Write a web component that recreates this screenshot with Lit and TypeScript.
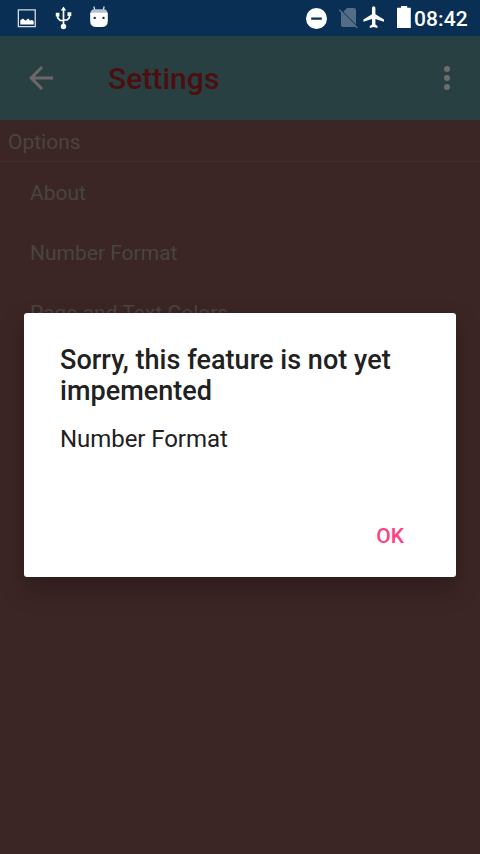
import { LitElement, html, css } from "lit";
import { customElement, property } from "lit/decorators.js";

@customElement("status-bar")
class StatusBar extends LitElement {
  static styles = css`
    :host { display: flex; height: 36px; background: #0a2f54; color: #fff; }
    .icons { display: block; flex: none; width: 414px; height: 36px; }
    .clock { padding-top: 1px; font: 500 21px/36px Roboto, sans-serif; letter-spacing: 0.1px; white-space: nowrap; }
  `;
  render() {
    return html`
      <svg class="icons" viewBox="0 0 414 36" fill="#fff">
        <g>
          <path d="M17.700 9.200h18.200v18H17.700zM19 10.500v15.400h15.600V10.500z" fill="#d3dbe3" fill-rule="evenodd" />
          <path d="M20.300 24.500v-4.200l2.700-1.800 2.500 2.300 2.700-2.300 1.800 2 2.200-.4 1.500 1.500v2.900z" />
        </g>
        <g>
          <circle cx="63.500" cy="26.500" r="2.700" />
          <path d="M60.800 10.400 63.500 6.500l2.700 3.900z" />
          <path d="M55.800 12.800h3.600v3.600h-3.600zM67.500 12.200h3.800v3.800h-3.800z" />
          <path d="M63.500 9v17M57.700 15.500v2.300l2.500 2.700h3.300M69.400 15v2.700l-2.300 2.300h-3.600" fill="none" stroke="#fff" stroke-width="1.700" />
        </g>
        <g>
          <path d="M93.800 6.500l1 3.500M104.200 6.500l-1 3.500" stroke="#d8dfe6" stroke-width="1.300" />
          <path d="M93.500 9.300h11q3 1 3 3.700h-17q0-2.700 3-3.700z" fill="#b4c0cc" />
          <path d="M90.200 12.800h17.600v8.200q0 6-6.300 6h-5q-6.300 0-6.300-6z" />
          <circle cx="94.700" cy="17.900" r="1.200" fill="#0a2f54" />
          <circle cx="103.500" cy="17.900" r="1.200" fill="#0a2f54" />
        </g>
        <path d="M316.500 8a10.500 10.500 0 1 0 0 21 10.500 10.500 0 0 0 0-21zm-5.300 9.500h10.600v2.300h-10.600z" fill-rule="evenodd" />
        <g fill="#546d87">
          <path d="M343.300 11.700 347 8h7q2 0 2 2v14.400z" />
          <path d="M341 11.400V25q0 2 2 2h13.500z" />
          <path d="M339.300 9.700 357.300 27.800" stroke="#546d87" stroke-width="1.500" />
        </g>
        <path d="M384 21.800v-2.200l-8.600-5.400V8a1.700 1.700 0 0 0-3.400 0v6.200l-8.600 5.400v2.200l8.600-2.700v5.400l-2.200 1.600v1.900l3.900-1.100 3.800 1.100v-1.900l-2.100-1.600v-5.400z" />
        <path d="M401 6h6.200v1.800h3.600V28H397V7.800h4z" />
      </svg>
      <span class="clock">08:42</span>
    `;
  }
}

@customElement("settings-page")
class SettingsPage extends LitElement {
  static styles = css`
    :host { display: block; font-family: Roboto, sans-serif; }
    .toolbar { display: flex; align-items: center; height: 84px; background: #284042; }
    .back { width: 36px; height: 36px; margin-left: 23px; }
    .title { flex: 1; margin-left: 49px; padding-top: 2px; font-size: 30px; line-height: 36px; letter-spacing: 0.05px; font-weight: 500; color: #4c0e0e; }
    .more { width: 36px; height: 36px; margin-right: 15px; }
    .category { box-sizing: border-box; height: 42px; padding: 2px 8px 0; border-bottom: 1px solid #452b32; font-size: 21px; line-height: 40px; color: #48453e; }
    .item { box-sizing: border-box; height: 60px; padding: 1px 30px 0; border-bottom: 1px solid #382424; font-size: 21px; line-height: 60px; color: #48453e; }
  `;
  render() {
    return html`
      <div class="toolbar">
        <svg class="back" viewBox="0 0 24 24" fill="#6b6867"><path d="M20 11H7.830l5.590-5.590L12 4l-8 8 8 8 1.410-1.410L7.830 13H20z" /></svg>
        <div class="title">Settings</div>
        <svg class="more" viewBox="0 0 24 24" fill="#6d6b6b"><circle cx="12" cy="6" r="2" /><circle cx="12" cy="12" r="2" /><circle cx="12" cy="18" r="2" /></svg>
      </div>
      <div class="category">Options</div>
      ${["About", "Number Format", "Page and Text Colors"].map((t) => html`<div class="item">${t}</div>`)}
    `;
  }
}

@customElement("alert-dialog")
class AlertDialog extends LitElement {
  @property() heading = "";
  @property() message = "";
  static styles = css`
    :host { box-sizing: border-box; display: flex; flex-direction: column; width: 432px; height: 264px; padding: 32px 36px 0; border-radius: 3px; background: #fff; color: #212121; font-family: Roboto, sans-serif; box-shadow: 0 12px 26px rgba(0, 0, 0, 0.24), 0 0 5px rgba(0, 0, 0, 0.08); }
    .heading { margin: 0; font-size: 27px; line-height: 31px; font-weight: 500; letter-spacing: 0.04px; }
    .message { margin: 18px 0 0; font-size: 24px; line-height: 28px; letter-spacing: -0.06px; }
    .ok { align-self: flex-end; margin: 71px 16px 0 0; padding: 0; border: 0; background: none; font: 500 21px/24px Roboto, sans-serif; color: #ff4081; }
  `;
  render() {
    return html`
      <h2 class="heading">${this.heading}</h2>
      <p class="message">${this.message}</p>
      <button class="ok">OK</button>
    `;
  }
}

@customElement("app-root")
class AppRoot extends LitElement {
  static styles = css`
    :host { display: block; position: relative; width: 480px; height: 854px; overflow: hidden; background: #3c2525; }
    .overlay { position: absolute; inset: 36px 0 0; display: grid; place-items: center; }
  `;
  render() {
    return html`
      <status-bar></status-bar>
      <settings-page></settings-page>
      <div class="overlay">
        <alert-dialog heading="Sorry, this feature is not yet impemented" message="Number Format"></alert-dialog>
      </div>
    `;
  }
}
